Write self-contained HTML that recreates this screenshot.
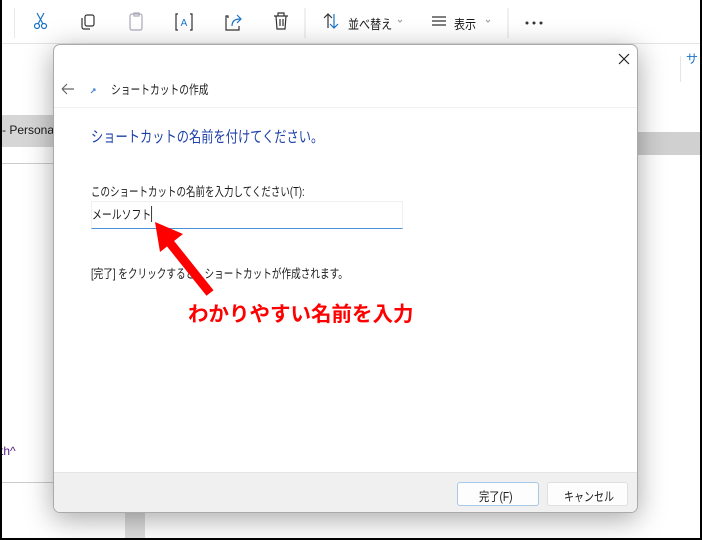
<!DOCTYPE html>
<html><head><meta charset="utf-8"><style>
*{margin:0;padding:0;box-sizing:border-box}
body{width:702px;height:540px;overflow:hidden;background:#fff;font-family:"Liberation Sans","Noto Sans CJK JP",sans-serif;position:relative;color:#1a1a1a}
.abs{position:absolute}
.n{transform:scaleX(.8);transform-origin:0 0;white-space:nowrap}
</style></head><body>
<div class="abs" style="left:0;top:0;width:702px;height:44px;background:#fff;border-bottom:1px solid #e5e5e5"></div>
<div class="abs" style="left:14px;top:8px;width:1px;height:30px;background:#e8e8e8"></div>
<svg class="abs" style="left:0;top:0" width="560" height="44" fill="none" stroke-width="1.2">
 <g stroke="#1a73c7"><circle cx="37" cy="26" r="2.5"/><circle cx="44" cy="26" r="2.5"/><path d="M38 24 L44 13 M43 24 L37 13"/></g>
 <g stroke="#333"><rect x="85" y="15" width="9" height="11" rx="2"/><path d="M82 18 v9 a2 2 0 0 0 2 2 h6"/></g>
 <g stroke="#aab"><rect x="130" y="14" width="12" height="16" rx="2"/><rect x="134" y="13" width="5" height="3"/></g>
 <g stroke="#333"><path d="M178 14 h-2 v16 h2 M190 14 h2 v16 h-2"/></g><text x="184" y="26" font-size="10" text-anchor="middle" fill="#1a73c7" stroke="none">A</text>
 <g stroke="#333"><path d="M228 18 v-2 h-2 v14 h13 v-4"/><path d="M232 26 q0 -7 8 -7 M237 15 l4 4 -4 4" stroke="#1a73c7"/></g>
 <g stroke="#333"><path d="M274 16 h14 M278 16 v-3 h6 v3 M276 16 l1 13 h8 l1 -13 M280 19 v7 M283 19 v7"/></g>
 <path d="M305 8 v30" stroke="#e5e5e5"/>
 <g stroke="#333"><path d="M328 28 v-14 M324 18 l4 -4 4 4"/><path d="M334 14 v14 M330 24 l4 4 4 -4" stroke="#1a73c7"/></g>
 <path d="M398 20 l2 2 2 -2" stroke="#999" stroke-width="1"/>
 <g stroke="#333"><path d="M432 17 h14 M432 21 h14 M432 25 h14"/></g>
 <path d="M486 20 l2 2 2 -2" stroke="#999" stroke-width="1"/>
 <path d="M508 8 v30" stroke="#e5e5e5"/>
 <g fill="#333" stroke="none"><circle cx="527" cy="23" r="1.5"/><circle cx="534" cy="23" r="1.5"/><circle cx="541" cy="23" r="1.5"/></g>
</svg>
<div class="abs n" style="left:348px;top:14px;font-size:13px;transform:scaleX(.85)">並べ替え</div>
<div class="abs n" style="left:454px;top:14px;font-size:13px;transform:scaleX(.85)">表示</div>
<div class="abs" style="left:0;top:115px;width:54px;height:32px;background:#d6d6d6"></div>
<div class="abs" style="left:2px;top:123px;font-size:12px">- Persona</div>
<div class="abs" style="left:0;top:163px;width:54px;height:1px;background:#ccc"></div>
<div class="abs" style="left:0;top:482px;width:54px;height:1px;background:#ccc"></div>
<div class="abs" style="left:0;top:444px;font-size:12px;color:#551a8b">th^</div>
<div class="abs" style="left:638px;top:132px;width:64px;height:23px;background:#d0d0d0"></div>
<div class="abs" style="left:680px;top:56px;width:1px;height:26px;background:#e5e5e5"></div>
<div class="abs" style="left:686px;top:50px;font-size:12px;color:#1a73c7">サ</div>
<div class="abs" style="left:125px;top:513px;width:20px;height:27px;background:#ddd"></div>
<div class="abs" style="left:0;top:0;width:2px;height:540px;background:#000"></div>
<div class="abs" style="left:700px;top:0;width:2px;height:540px;background:#000"></div>
<div class="abs" style="left:0;top:538px;width:702px;height:2px;background:#000"></div>
<div class="abs" style="left:53px;top:44px;width:585px;height:469px;background:#fff;border:1px solid #aaa;border-radius:7px;box-shadow:0 6px 28px rgba(0,0,0,.35);overflow:hidden">
 <svg class="abs" style="left:562px;top:6px" width="16" height="16"><path d="M3 3 L13 13 M13 3 L3 13" stroke="#222" stroke-width="1.2"/></svg>
 <svg class="abs" style="left:6px;top:36px" width="16" height="16"><path d="M2 8 H14 M2 8 L7 3 M2 8 L7 13" stroke="#666" stroke-width="1.2" fill="none"/></svg>
 <svg class="abs" style="left:34px;top:40px" width="10" height="10"><path d="M3 8 L7 4 M5 4 H7 V6" stroke="#3a7bd5" stroke-width="1" fill="none"/></svg>
 <div class="abs n" style="left:57px;top:34px;font-size:12.5px;transform:scaleX(.78)">ショートカットの作成</div>
 <div class="abs" style="left:0;top:62px;width:585px;height:1px;background:#f0f0f0"></div>
 <div class="abs n" style="left:37px;top:80px;font-size:15.5px;color:#1e40a8;transform:scaleX(.79)">ショートカットの名前を付けてください。</div>
 <div class="abs n" style="left:37px;top:136px;font-size:12.5px;transform:scaleX(.76)">このショートカットの名前を入力してください(T):</div>
 <div class="abs" style="left:37px;top:156px;width:312px;height:28px;border:1px solid #f0f0f0;border-bottom:1px solid #4a90d9"></div>
 <div class="abs n" style="left:38px;top:159px;font-size:12.5px;transform:scaleX(.79)">メールソフト<span style="display:inline-block;width:1px;height:16px;background:#000;vertical-align:-3px"></span></div>
 <div class="abs n" style="left:37px;top:218px;font-size:12.5px;transform:scaleX(.77)">[完了] をクリックすると、ショートカットが作成されます。</div>
 <div class="abs" style="left:0;top:427px;width:585px;height:42px;background:#f0f0f0;border-top:1px solid #e5e5e5"></div>
 <div class="abs" style="left:403px;top:437px;width:82px;height:24px;background:#fdfdfd;border:1px solid #a9c8ea;border-radius:3px"></div>
 <div class="abs n" style="left:425px;top:441px;font-size:12.5px;transform:scaleX(.82)">完了(F)</div>
 <div class="abs" style="left:493px;top:437px;width:81px;height:24px;background:#fdfdfd;border:1px solid #e0e0e0;border-radius:3px"></div>
 <div class="abs n" style="left:510px;top:441px;font-size:12.5px;transform:scaleX(.8)">キャンセル</div>
</div>
<svg class="abs" style="left:0;top:0" width="702" height="540">
 <path d="M210 293 L170 243" stroke="#ff0000" stroke-width="9"/>
 <polygon points="155,222 183,234 160,252" fill="#ff0000"/>
</svg>
<div class="abs" style="left:188px;top:297px;font-size:20.5px;font-weight:bold;color:#ff0000;white-space:nowrap">わかりやすい名前を入力</div>
</body></html>
